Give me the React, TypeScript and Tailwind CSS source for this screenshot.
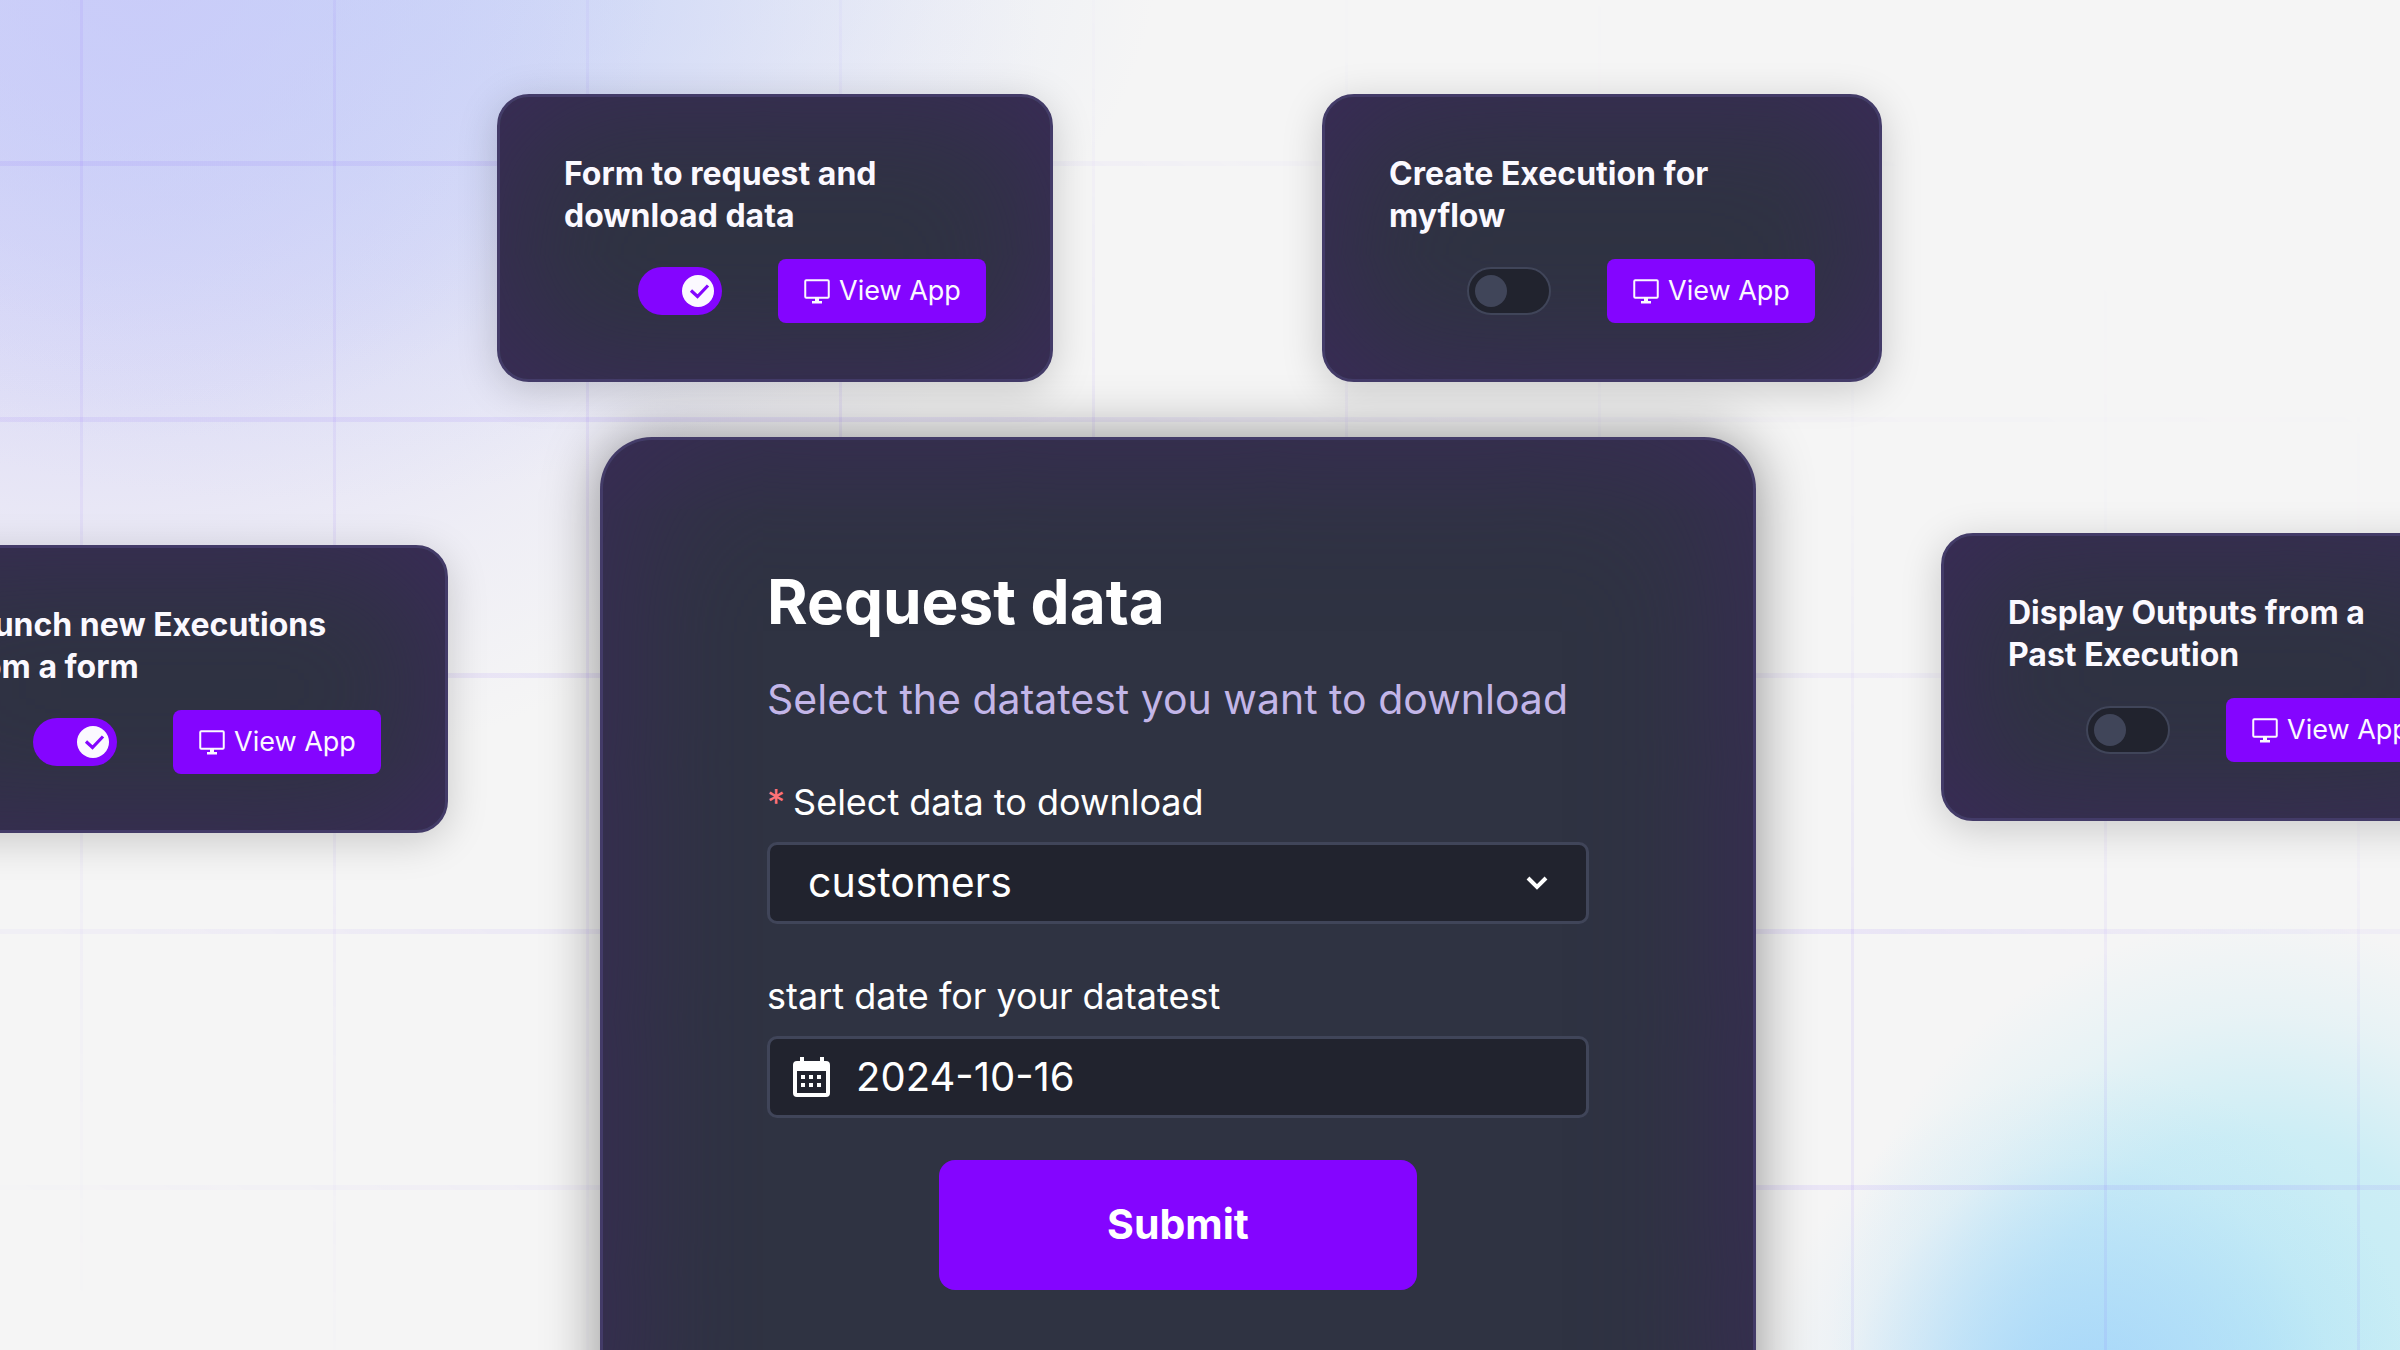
import React, { useState } from "react";

type AppCardProps = {
  title: string;
  enabled: boolean;
  className: string;
};

function MonitorIcon() {
  return (
    <svg viewBox="0 0 28 28" className="h-7 w-7 shrink-0" fill="none" aria-hidden="true">
      <rect x="2.25" y="3.25" width="23.5" height="17.5" rx="1" stroke="currentColor" strokeWidth="2" />
      <path d="M12 21h4v3h3v2.5H9V24h3z" fill="currentColor" />
    </svg>
  );
}

function Toggle({ label, initial }: { label: string; initial: boolean }) {
  const [on, setOn] = useState(initial);
  return (
    <label
      className={
        on
          ? "relative flex h-12 w-21 cursor-pointer items-center justify-end rounded-full bg-[#8405ff] px-2"
          : "relative flex h-12 w-21 cursor-pointer items-center rounded-full border-2 border-[#404559] bg-[#21232e] px-1.5"
      }
    >
      <input
        type="checkbox"
        role="switch"
        aria-label={label}
        className="sr-only"
        checked={on}
        onChange={() => setOn(!on)}
      />
      <span
        className={
          on
            ? "flex h-8 w-8 items-center justify-center rounded-full bg-[#fbf9ff]"
            : "h-8 w-8 rounded-full bg-[#404559]"
        }
      >
        {on && (
          <svg viewBox="0 0 32 32" className="h-8 w-8" fill="none" aria-hidden="true">
            <path d="M9 15.5l6.5 6L26 10.5" stroke="#8405ff" strokeWidth="3.2" />
          </svg>
        )}
      </span>
    </label>
  );
}

function AppCard({ title, enabled, className }: AppCardProps) {
  return (
    <article
      className={
        "shrink-0 rounded-[32px] border-3 border-[#433b68] bg-[#2f3342] px-16 pt-14 pb-14 shadow-[0_8px_40px_rgba(0,0,0,0.18),inset_0_0_140px_#3c2a5c] " +
        className
      }
    >
      <h2 className="text-[32px] leading-[42px] font-bold whitespace-pre-line text-[#fbf9ff]">{title}</h2>
      <div className="mt-[22px] flex items-center justify-end gap-14">
        <Toggle label={title} initial={enabled} />
        <button
          type="button"
          className="flex h-16 w-52 items-center justify-center gap-2 rounded-lg bg-[#8405ff] text-[27px] text-[#fbf9ff]"
        >
          <MonitorIcon />
          View App
        </button>
      </div>
    </article>
  );
}

function CalendarIcon() {
  return (
    <svg viewBox="0 0 40 42" className="h-[42px] w-10" fill="currentColor" aria-hidden="true">
      <path
        fillRule="evenodd"
        d="M8 1h4v4h16V1h4v4h2a4 4 0 0 1 4 4v28a4 4 0 0 1-4 4H5a4 4 0 0 1-4-4V9a4 4 0 0 1 4-4h3zM5 15v22h29V15z"
      />
      <path d="M9 19h4v4H9zM17 19h4v4h-4zM25 19h4v4h-4zM9 27h4v4H9zM17 27h4v4h-4zM25 27h4v4h-4z" />
    </svg>
  );
}

function RequestForm() {
  const [dataset, setDataset] = useState("customers");
  const [date, setDate] = useState("2024-10-16");
  return (
    <form
      onSubmit={(e: React.FormEvent) => e.preventDefault()}
      className="-mb-40 flex w-[1156px] shrink-0 flex-col self-stretch rounded-t-[52px] border-3 border-b-0 border-[#433b68] bg-[#2f3342] px-41 pt-30 shadow-[0_0_56px_rgba(0,0,0,0.42),inset_0_0_160px_#3c2a5c]"
    >
      <h1 className="text-[62px] leading-[84px] font-bold text-white">Request data</h1>
      <p className="mt-[26px] text-[41px] leading-[58px] text-[#c3b6e8]">Select the datatest you want to download</p>
      <label htmlFor="dataset" className="mt-[50px] text-[36px] leading-[48px] text-white">
        <span className="mr-2 text-[#fd7278]">*</span>
        Select data to download
      </label>
      <div className="relative mt-4">
        <select
          id="dataset"
          value={dataset}
          onChange={(e) => setDataset(e.target.value)}
          className="h-[82px] w-full appearance-none rounded-[10px] border-3 border-[#404559] bg-[#21232e] px-[38px] text-[41px] text-white"
        >
          <option>customers</option>
          <option>orders</option>
        </select>
        <svg
          viewBox="0 0 24 24"
          className="pointer-events-none absolute top-7 right-10 h-6 w-6"
          fill="none"
          aria-hidden="true"
        >
          <path d="M3 8l9 9 9-9" stroke="white" strokeWidth="4" />
        </svg>
      </div>
      <label htmlFor="start" className="mt-12 text-[36px] leading-[48px] text-white">
        start date for your datatest
      </label>
      <div className="mt-4 flex h-[82px] items-center gap-6 rounded-[10px] border-3 border-[#404559] bg-[#21232e] px-[22px] text-white">
        <CalendarIcon />
        <input
          id="start"
          type="text"
          value={date}
          onChange={(e) => setDate(e.target.value)}
          className="min-w-0 flex-1 bg-transparent text-[40px] outline-none"
        />
      </div>
      <button
        type="submit"
        className="mt-[42px] h-[130px] w-[478px] self-center rounded-2xl bg-[#8405ff] text-[41px] font-bold text-white"
      >
        Submit
      </button>
    </form>
  );
}

export default function App() {
  return (
    <main className="relative isolate flex h-screen flex-col overflow-hidden bg-[#f5f5f5] font-['Inter',sans-serif]">
      <div className="absolute inset-0 -z-10 bg-[radial-gradient(520px_480px_at_140px_-40px,#c8c8fac0_0%,#c8c8fa60_50%,#c8c8fa00_100%),radial-gradient(860px_560px_at_300px_-60px,#c9d6f7_0%,#c9d6f7a0_40%,#c9d6f730_75%,#c9d6f700_100%),radial-gradient(960px_740px_at_80px_60px,#d6d3f7_0%,#d6d3f7a0_45%,#d6d3f738_75%,#d6d3f700_100%),radial-gradient(330px_350px_at_2090px_1420px,#a3d4fa_0%,#a3d4fa80_45%,#a3d4fa20_75%,#a3d4fa00_100%),radial-gradient(430px_430px_at_2260px_1350px,#bfebf5_0%,#bfebf5c0_50%,#bfebf540_78%,#bfebf500_100%)]" />
      <div className="absolute inset-0 -z-10 mask-[linear-gradient(to_top_right,transparent_3%,black_38%,black_54%,#0003_70%,transparent_85%)] bg-[linear-gradient(90deg,#7c4dff14_3px,transparent_3px),linear-gradient(#7c4dff18_5px,transparent_5px)] bg-size-[253px_256px] bg-position-[80px_161px]" />
      <div className="flex shrink-0 justify-center gap-[269px] pt-[94px] pr-[21px]">
        <AppCard title={"Form to request and\ndownload data"} enabled className="w-[556px]" />
        <AppCard title={"Create Execution for\nmyflow"} enabled={false} className="w-[560px]" />
      </div>
      <div className="mt-[55px] flex min-h-0 flex-1 items-start justify-center">
        <AppCard title={"Launch new Executions\nfrom a form"} enabled className="mt-27 mr-38 w-[558px]" />
        <RequestForm />
        <AppCard
          title={"Display Outputs from a\nPast Execution"}
          enabled={false}
          className="mt-24 mr-[9px] ml-[185px] w-[560px]"
        />
      </div>
    </main>
  );
}
